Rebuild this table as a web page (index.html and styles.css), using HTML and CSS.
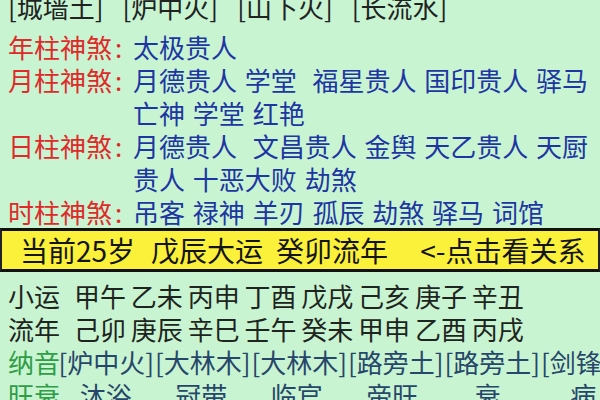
FILE: index.html
```html
<!DOCTYPE html>
<html lang="zh-CN">
<head>
<meta charset="utf-8">
<link rel="stylesheet" href="styles.css">
</head>
<body>
<div class="page">
  <div class="nayin-top">
    <span>[城墙土]</span><span>[炉中火]</span><span>[山下火]</span><span>[长流水]</span>
  </div>

  <div class="shensha">
    <div class="ss-row">
      <div class="ss-label">年柱神煞<span class="colon">:</span></div>
      <div class="ss-vals"><div>太极贵人</div></div>
    </div>
    <div class="ss-row">
      <div class="ss-label">月柱神煞<span class="colon">:</span></div>
      <div class="ss-vals"><div>月德贵人 学堂&nbsp; 福星贵人 国印贵人 驿马</div><div>亡神 学堂 红艳</div></div>
    </div>
    <div class="ss-row">
      <div class="ss-label">日柱神煞<span class="colon">:</span></div>
      <div class="ss-vals"><div>月德贵人&nbsp; 文昌贵人 金舆 天乙贵人 天厨</div><div>贵人 十恶大败 劫煞</div></div>
    </div>
    <div class="ss-row">
      <div class="ss-label">时柱神煞<span class="colon">:</span></div>
      <div class="ss-vals"><div>吊客 禄神 羊刃 孤辰 劫煞 驿马 词馆</div></div>
    </div>
  </div>

  <div class="yun-bar">
    <span class="yb-age">当前25岁</span>
    <span class="yb-dayun">戊辰大运</span>
    <span class="yb-liunian">癸卯流年</span>
    <span class="yb-link">&lt;-点击看关系</span>
  </div>

  <div class="yun-list">
    <div class="gz-row"><span class="gz-label">小运</span><span class="gz-vals">甲午 乙未 丙申 丁酉 戊戌 己亥 庚子 辛丑</span></div>
    <div class="gz-row"><span class="gz-label">流年</span><span class="gz-vals">己卯 庚辰 辛巳 壬午 癸未 甲申 乙酉 丙戌</span></div>
    <div class="col-row nayin-row">
      <span class="col-label">纳音</span>
      <span class="col-cell">[炉中火]</span><span class="col-cell">[大林木]</span><span class="col-cell">[大林木]</span><span class="col-cell">[路旁土]</span><span class="col-cell">[路旁土]</span><span class="col-cell">[剑锋金]</span>
    </div>
    <div class="col-row wangshuai-row">
      <span class="col-label">旺衰</span>
      <span class="col-cell">沐浴</span><span class="col-cell">冠带</span><span class="col-cell">临官</span><span class="col-cell">帝旺</span><span class="col-cell">衰</span><span class="col-cell">病</span>
    </div>
  </div>
</div>
</body>
</html>
```

FILE: styles.css
```css
html, body {
  margin: 0;
  padding: 0;
}

body {
  background: #c9f4d2;
  font-family: "Noto Sans CJK SC", "Noto Sans", sans-serif;
  font-size: 26px;
  color: #1f2322;
  width: 600px;
  height: 400px;
  overflow: hidden;
}

.page {
  display: flex;
  flex-direction: column;
  width: 600px;
  overflow: hidden;
}

.nayin-top {
  display: flex;
  gap: 19px;
  padding-left: 8px;
  margin-top: -10px;
  line-height: 34px;
  color: #202322;
  white-space: nowrap;
}

.shensha {
  padding-top: 6px;
  display: flex;
  flex-direction: column;
}

.ss-row {
  display: grid;
  grid-template-columns: 133px 1fr;
  line-height: 33px;
}

.ss-label {
  padding-left: 8px;
  color: #df2a2a;
  white-space: nowrap;
}

.colon {
  margin-left: 3px;
}

.ss-vals {
  color: #1d36a2;
  word-spacing: 2px;
  white-space: nowrap;
}

.yun-bar {
  display: flex;
  align-items: center;
  height: 38px;
  background: #fbf03a;
  border-top: 3px solid #111;
  border-bottom: 3px solid #111;
  border-left: 2px solid #222;
  border-right: 2px solid #222;
  padding-left: 18px;
  font-size: 28px;
  color: #141414;
  white-space: nowrap;
}

.yb-dayun {
  margin-left: 16px;
}

.yb-liunian {
  margin-left: 13px;
}

.yb-link {
  margin-left: 32px;
}

.yun-list {
  padding-top: 7px;
  display: flex;
  flex-direction: column;
}

.gz-row {
  display: flex;
  line-height: 33px;
  padding-left: 8px;
  white-space: nowrap;
  color: #1e2420;
}

.gz-label {
  width: 66px;
  flex: none;
}

.gz-vals {
  word-spacing: -1px;
}

.col-row {
  display: grid;
  padding-left: 8px;
  line-height: 33px;
  white-space: nowrap;
  overflow: hidden;
}

.nayin-row {
  grid-template-columns: 50px repeat(6, 96.5px);
}

.wangshuai-row {
  grid-template-columns: 50px repeat(6, 95.5px);
}

.col-label {
  color: #2f9d46;
}

.col-cell {
  text-align: center;
  color: #27476a;
}
```
